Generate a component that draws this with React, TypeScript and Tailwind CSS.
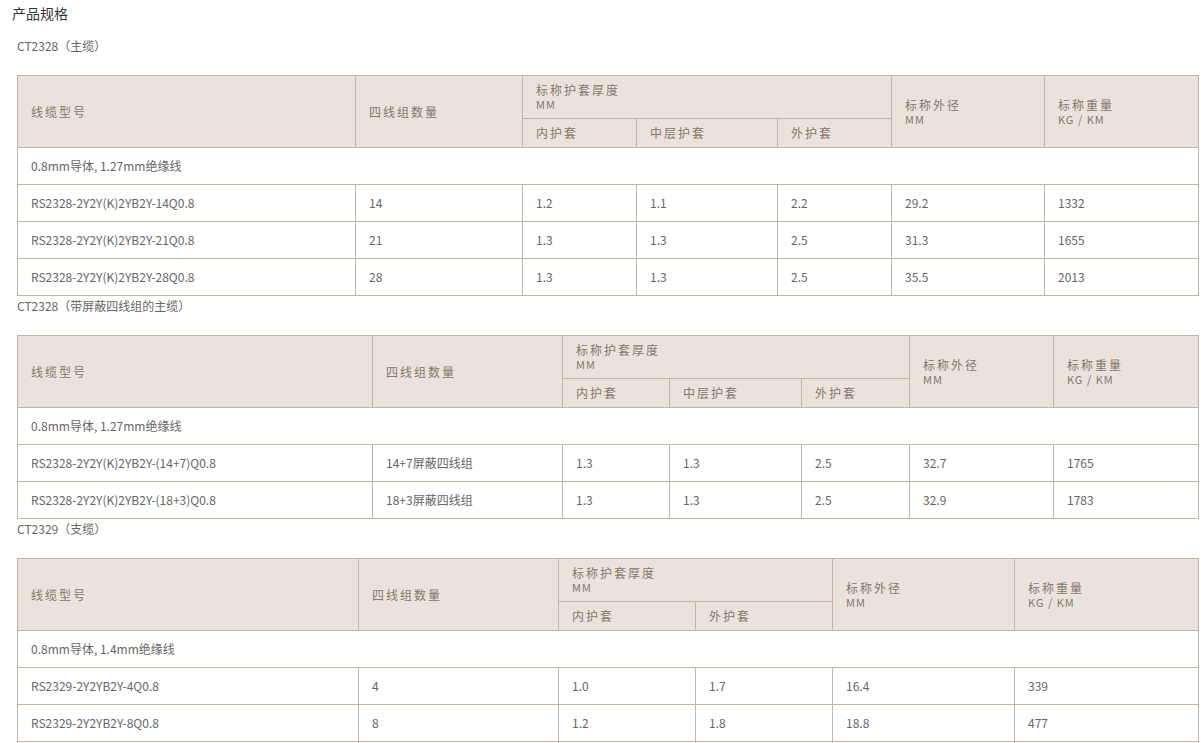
import React from "react"

type Table = {
  caption: string
  cols: number[]
  sub: string[]
  group: string
  rows: string[][]
}

const tables: Table[] = [
  {
    caption: "CT2328（主缆）",
    cols: [338, 167, 114, 141, 114, 153, 154],
    sub: ["内护套", "中层护套", "外护套"],
    group: "0.8mm导体, 1.27mm绝缘线",
    rows: [
      ["RS2328-2Y2Y(K)2YB2Y-14Q0.8", "14", "1.2", "1.1", "2.2", "29.2", "1332"],
      ["RS2328-2Y2Y(K)2YB2Y-21Q0.8", "21", "1.3", "1.3", "2.5", "31.3", "1655"],
      ["RS2328-2Y2Y(K)2YB2Y-28Q0.8", "28", "1.3", "1.3", "2.5", "35.5", "2013"],
    ],
  },
  {
    caption: "CT2328（带屏蔽四线组的主缆）",
    cols: [355, 190, 107, 132, 108, 144, 145],
    sub: ["内护套", "中层护套", "外护套"],
    group: "0.8mm导体, 1.27mm绝缘线",
    rows: [
      ["RS2328-2Y2Y(K)2YB2Y-(14+7)Q0.8", "14+7屏蔽四线组", "1.3", "1.3", "2.5", "32.7", "1765"],
      ["RS2328-2Y2Y(K)2YB2Y-(18+3)Q0.8", "18+3屏蔽四线组", "1.3", "1.3", "2.5", "32.9", "1783"],
    ],
  },
  {
    caption: "CT2329（支缆）",
    cols: [341, 200, 137, 137, 182, 184],
    sub: ["内护套", "外护套"],
    group: "0.8mm导体, 1.4mm绝缘线",
    rows: [
      ["RS2329-2Y2YB2Y-4Q0.8", "4", "1.0", "1.7", "16.4", "339"],
      ["RS2329-2Y2YB2Y-8Q0.8", "8", "1.2", "1.8", "18.8", "477"],
      ["", "", "", "", "", ""],
    ],
  },
]

const cellBorder = "border border-[#c2b5a7]"

const SpecTable = ({ t }: { t: Table }) => {
  return (
    <div>
      {/* caption */}
      <p className="h-5 leading-5 text-xs text-[#666]">{t.caption}</p>
      <table className="mt-[19px] w-[1181px] table-fixed border-collapse text-xs">
        <colgroup>
          {t.cols.map((w, i) => (
            <col key={i} style={{ width: w }} />
          ))}
        </colgroup>
        <thead className="bg-[#e9e3dc] text-[#85786d] tracking-[2px]">
          <tr className="h-[43px]">
            <th rowSpan={2} className={`${cellBorder} pl-[13px] text-left font-normal`}>
              线缆型号
            </th>
            <th rowSpan={2} className={`${cellBorder} pl-[13px] text-left font-normal`}>
              四线组数量
            </th>
            <th colSpan={t.sub.length} className={`${cellBorder} pl-[13px] text-left font-normal leading-[14px]`}>
              标称护套厚度
              <br />
              <span className="text-[11px] tracking-[1px]">MM</span>
            </th>
            <th rowSpan={2} className={`${cellBorder} pl-[13px] text-left font-normal leading-[14px]`}>
              标称外径
              <br />
              <span className="text-[11px] tracking-[1px]">MM</span>
            </th>
            <th rowSpan={2} className={`${cellBorder} pl-[13px] text-left font-normal leading-[14px]`}>
              标称重量
              <br />
              <span className="text-[11px] tracking-[1px]">KG / KM</span>
            </th>
          </tr>
          <tr className="h-[29px]">
            {t.sub.map((s) => (
              <th key={s} className={`${cellBorder} pl-[13px] text-left font-normal`}>
                {s}
              </th>
            ))}
          </tr>
        </thead>
        <tbody className="text-[#666]">
          <tr className="h-[37px]">
            <td colSpan={t.cols.length} className={`${cellBorder} pl-[13px]`}>
              {t.group}
            </td>
          </tr>
          {t.rows.map((r, ri) => (
            <tr key={ri} className="h-[37px]">
              {r.map((c, i) => (
                <td key={i} className={`${cellBorder} pl-[13px]`}>
                  {c}
                </td>
              ))}
            </tr>
          ))}
        </tbody>
      </table>
    </div>
  )
}

export default function App() {
  return (
    <div className="bg-white pl-3 font-['Noto_Sans_CJK_SC','Noto_Sans',sans-serif]">
      {/* title */}
      <h2 className="h-[26px] leading-[26px] text-sm text-[#333]">产品规格</h2>
      <div className="mt-[10px] pl-[5px]">
        {tables.map((t) => (
          <SpecTable key={t.caption} t={t} />
        ))}
      </div>
    </div>
  )
}
